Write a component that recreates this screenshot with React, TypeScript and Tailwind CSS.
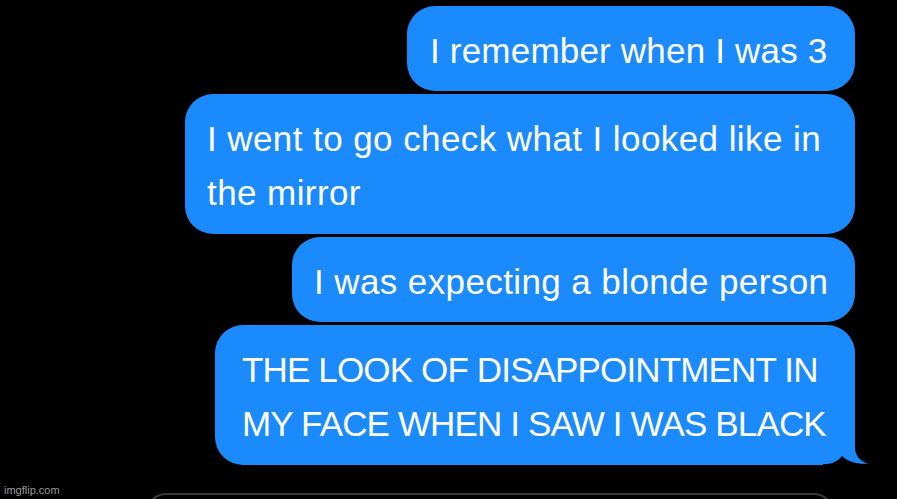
import React from "react";

const font = { fontFamily: '"Liberation Sans", Arial, sans-serif' };

function Tail() {
  return (
    <svg
      className="absolute"
      style={{ right: -14, bottom: 0 }}
      width="46"
      height="29"
      viewBox="0 0 46 29"
    >
      <rect x="0" y="10" width="46" height="19" fill="#000" />
      <path
        d="M0 0 L32 0 L32 11 C32 19 36 25 45 27.6 C36 28.6 25 26 19 20 C15 24.5 10 28 3 28 L0 28 Z"
        fill="#1b8afd"
      />
    </svg>
  );
}

export default function App() {
  return (
    <div
      className="relative w-[897px] h-[499px] bg-black overflow-hidden text-white"
      style={font}
    >
      <div className="flex flex-col items-end gap-[3px] pt-[6px] pr-[42px]">
        <div className="w-[448px] rounded-[28px] bg-[#1b8afd] pl-[23px] pt-[18px] pb-[13px] text-[35px] leading-[54px] tracking-[0.2px] whitespace-nowrap">
          I remember when I was 3
        </div>
        <div className="w-[670px] rounded-[28px] bg-[#1b8afd] pl-[22px] pt-[18px] pb-[14px] text-[35px] leading-[54px] tracking-[0.42px] whitespace-nowrap">
          I went to go check what I looked like in
          <br />
          the mirror
        </div>
        <div className="w-[563px] rounded-[28px] bg-[#1b8afd] pl-[22px] pt-[18px] pb-[13px] text-[35px] leading-[54px] tracking-[0.4px] whitespace-nowrap">
          I was expecting a blonde person
        </div>
        <div className="relative w-[640px] rounded-[28px] rounded-br-none bg-[#1b8afd] pl-[27px] pt-[18px] pb-[14px] text-[35px] leading-[54px] tracking-[-0.85px] whitespace-nowrap">
          THE LOOK OF DISAPPOINTMENT IN
          <br />
          MY FACE WHEN I SAW I WAS BLACK
          <Tail />
        </div>
      </div>
      <div className="mt-[28px] ml-[146px] w-[688px] h-[40px] rounded-[22px] border-2 border-[#38383a]" />
      <div
        className="absolute left-[4px] top-[483px] text-[11px] leading-[14px] text-[#9a9a9a]"
        style={font}
      >
        imgflip.com
      </div>
    </div>
  );
}
